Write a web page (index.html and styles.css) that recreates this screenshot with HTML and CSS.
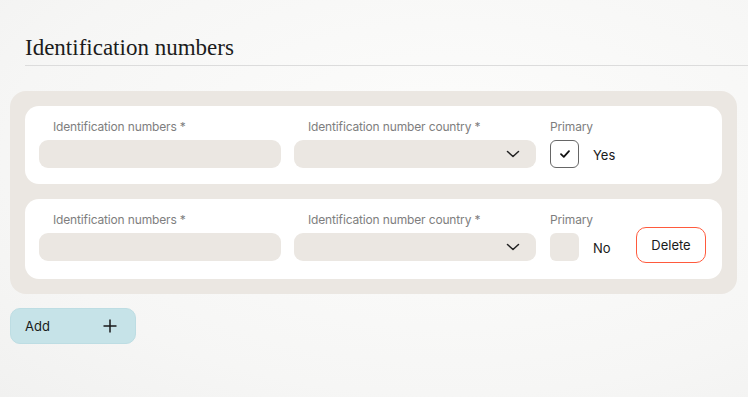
FILE: index.html
```html
<!DOCTYPE html>
<html lang="en">
<head>
    <meta charset="UTF-8">
    <meta name="viewport" content="width=device-width, initial-scale=1.0">
    <title>Identification numbers</title>
    <link rel="stylesheet" href="styles.css">
</head>
<body>
    <main class="page">
        <h2 class="section-title">Identification numbers</h2>

        <div class="id-list">
            <div class="id-card">
                <div class="field">
                    <label class="field-label">Identification numbers *</label>
                    <div class="control"></div>
                </div>
                <div class="field">
                    <label class="field-label">Identification number country *</label>
                    <div class="control select">
                        <svg class="chevron" width="14" height="8" viewBox="0 0 14 8"><path d="M1.5 1.5 L7 6.5 L12.5 1.5" fill="none" stroke="#222" stroke-width="1.5" stroke-linecap="round" stroke-linejoin="round"/></svg>
                    </div>
                </div>
                <div class="primary">
                    <label class="field-label">Primary</label>
                    <div class="primary-row">
                        <div class="checkbox checked">
                            <svg width="12" height="10" viewBox="0 0 12 10"><path d="M2 5.2 L4.8 7.8 L10 2.2" fill="none" stroke="#111" stroke-width="1.8" stroke-linecap="round" stroke-linejoin="round"/></svg>
                        </div>
                        <span class="primary-text">Yes</span>
                    </div>
                </div>
            </div>

            <div class="id-card removable">
                <div class="field">
                    <label class="field-label">Identification numbers *</label>
                    <div class="control"></div>
                </div>
                <div class="field">
                    <label class="field-label">Identification number country *</label>
                    <div class="control select">
                        <svg class="chevron" width="14" height="8" viewBox="0 0 14 8"><path d="M1.5 1.5 L7 6.5 L12.5 1.5" fill="none" stroke="#222" stroke-width="1.5" stroke-linecap="round" stroke-linejoin="round"/></svg>
                    </div>
                </div>
                <div class="primary">
                    <label class="field-label">Primary</label>
                    <div class="primary-row">
                        <div class="checkbox"></div>
                        <span class="primary-text">No</span>
                    </div>
                </div>
                <button class="delete-btn">Delete</button>
            </div>
        </div>

        <button class="add-btn">
            <span>Add</span>
            <svg width="14" height="14" viewBox="0 0 14 14"><path d="M7 0.5 V13.5 M0.5 7 H13.5" fill="none" stroke="#1a1a1a" stroke-width="1.5"/></svg>
        </button>
    </main>
</body>
</html>
```

FILE: styles.css
```css
body {
    margin: 0;
    font-family: Inter, "Noto Sans", sans-serif;
    background: radial-gradient(ellipse at 60% 40%, #fdfdfc 0%, #f6f6f5 70%, #f1f1f0 100%);
    min-height: 397px;
    color: #1f1f1f;
}
.page {
    padding: 35px 0 0 10px;
}
.section-title {
    font-family: "Liberation Serif", "DejaVu Serif", serif;
    font-weight: normal;
    font-size: 23px;
    line-height: 26px;
    margin: 0 0 25px 15px;
    padding-bottom: 4px;
    border-bottom: 1px solid #dcdcdc;
    color: #1c1c1c;
}
.id-list {
    width: 697px;
    background-color: #ebe7e2;
    border-radius: 16px;
    padding: 15px;
    display: flex;
    flex-direction: column;
    gap: 15px;
}
.id-card {
    background-color: #fff;
    border-radius: 14px;
    padding: 14px 16px 16px 14px;
    display: flex;
    align-items: flex-start;
}
.id-card.removable {
    padding-bottom: 18px;
}
.field {
    width: 242px;
    margin-right: 13px;
}
.field + .field {
    margin-right: 14px;
}
.field-label {
    display: block;
    font-size: 12px;
    line-height: 14px;
    margin-bottom: 6px;
    letter-spacing: -0.15px;
    color: #7e7e7e;
    padding-left: 14px;
}
.control {
    height: 28px;
    background-color: #ebe7e2;
    border-radius: 9px;
}
.select {
    display: flex;
    align-items: center;
    justify-content: flex-end;
    padding-right: 16px;
}
.primary .field-label {
    padding-left: 0;
}
.primary-row {
    display: flex;
    align-items: center;
}
.checkbox {
    width: 29px;
    height: 28px;
    box-sizing: border-box;
    border-radius: 6px;
    background-color: #ebe7e2;
    display: flex;
    align-items: center;
    justify-content: center;
}
.checkbox.checked {
    background-color: #fff;
    border: 1px solid #666;
}
.primary-text {
    font-size: 13px;
    margin-left: 14px;
    margin-top: 2px;
    color: #1a1a1a;
}
.delete-btn {
    align-self: flex-end;
    margin-left: auto;
    margin-bottom: -2px;
    width: 70px;
    height: 36px;
    background: #fff;
    border: 1.5px solid #ff5a3d;
    border-radius: 10px;
    font-family: inherit;
    font-size: 13px;
    color: #1a1a1a;
    padding: 0;
}
.add-btn {
    margin-top: 14px;
    width: 126px;
    height: 36px;
    background-color: #c6e3e8;
    border: 1px solid #bddde3;
    border-radius: 10px;
    display: flex;
    align-items: center;
    justify-content: space-between;
    padding: 0 18px 0 14px;
    font-family: inherit;
    font-size: 13px;
    color: #1a1a1a;
}
```
